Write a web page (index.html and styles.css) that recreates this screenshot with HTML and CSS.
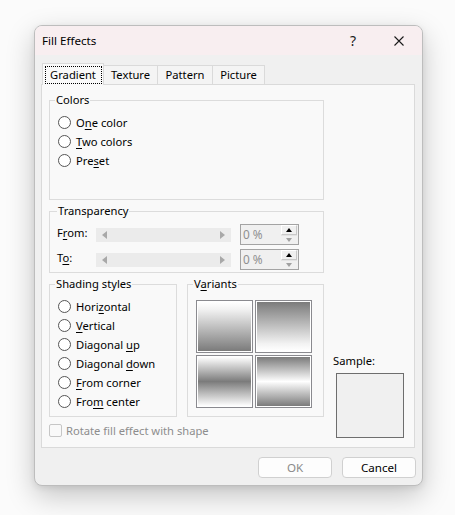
FILE: index.html
```html
<!DOCTYPE html>
<html lang="en">
<head>
<meta charset="utf-8">
<title>Fill Effects</title>
<link rel="stylesheet" href="styles.css">
</head>
<body>
<div class="dialog">
  <div class="titlebar">
    <span class="title">Fill Effects</span>
    <span class="tb-btn help">?</span>
    <span class="tb-btn close">
      <svg width="10" height="10" viewBox="0 0 10 10"><path d="M0.5 0.5 L9.5 9.5 M9.5 0.5 L0.5 9.5" stroke="#1a1a1a" stroke-width="1.1" fill="none"/></svg>
    </span>
  </div>
  <div class="body">
    <div class="tabs">
      <div class="tab selected w-gradient"><span class="focus">Gradient</span></div>
      <div class="tab w-texture">Texture</div>
      <div class="tab w-pattern">Pattern</div>
      <div class="tab w-picture">Picture</div>
    </div>
    <div class="panel">
      <div class="left">
        <fieldset class="group colors">
          <legend>Colors</legend>
          <div class="opts colors-opts">
            <div class="radio"><span class="circle"></span><span>O<u>n</u>e color</span></div>
            <div class="radio"><span class="circle"></span><span><u>T</u>wo colors</span></div>
            <div class="radio"><span class="circle"></span><span>Pre<u>s</u>et</span></div>
          </div>
        </fieldset>
        <fieldset class="group transparency">
          <legend>Transparency</legend>
          <div class="trow">
            <span class="tlabel">F<u>r</u>om:</span>
            <div class="slider"><span class="tri tri-left"></span><span class="tri tri-right"></span></div>
            <div class="spin">
              <span class="spin-text">0 %</span>
              <div class="spin-btns">
                <span class="sb up"><span class="arr arr-up"></span></span>
                <span class="sb down"><span class="arr arr-down"></span></span>
              </div>
            </div>
          </div>
          <div class="trow">
            <span class="tlabel">T<u>o</u>:</span>
            <div class="slider"><span class="tri tri-left"></span><span class="tri tri-right"></span></div>
            <div class="spin">
              <span class="spin-text">0 %</span>
              <div class="spin-btns">
                <span class="sb up"><span class="arr arr-up"></span></span>
                <span class="sb down"><span class="arr arr-down"></span></span>
              </div>
            </div>
          </div>
        </fieldset>
        <div class="lower">
          <fieldset class="group shading">
            <legend>Shading styles</legend>
            <div class="opts">
              <div class="radio"><span class="circle"></span><span>Hori<u>z</u>ontal</span></div>
              <div class="radio"><span class="circle"></span><span><u>V</u>ertical</span></div>
              <div class="radio"><span class="circle"></span><span>Diagonal <u>u</u>p</span></div>
              <div class="radio"><span class="circle"></span><span>Diagonal <u>d</u>own</span></div>
              <div class="radio"><span class="circle"></span><span><u>F</u>rom corner</span></div>
              <div class="radio"><span class="circle"></span><span>Fro<u>m</u> center</span></div>
            </div>
          </fieldset>
          <fieldset class="group variants">
            <legend>V<u>a</u>riants</legend>
            <div class="vgrid">
              <div class="cell"><div class="grad g1"></div></div>
              <div class="cell"><div class="grad g2"></div></div>
              <div class="cell"><div class="grad g3"></div></div>
              <div class="cell"><div class="grad g4"></div></div>
            </div>
          </fieldset>
        </div>
        <div class="check">
          <span class="box"></span>
          <span>Rotate fill effect with shape</span>
        </div>
      </div>
      <div class="right">
        <div class="sample-label">Sample:</div>
        <div class="sample"></div>
      </div>
    </div>
    <div class="buttons">
      <button class="btn disabled">OK</button>
      <button class="btn">Cancel</button>
    </div>
  </div>
</div>
</body>
</html>
```
FILE: styles.css
```css
* { box-sizing: border-box; }
html, body { margin: 0; padding: 0; }
body {
  background: #fbfbfb;
  font-family: "Noto Sans", "Open Sans", sans-serif;
  font-size: 11.2px;
  color: #000;
  width: 455px;
  height: 515px;
  overflow: hidden;
}
u { text-decoration: underline; text-underline-offset: 2px; }

.dialog {
  margin: 25px 0 0 34px;
  width: 389px;
  height: 461px;
  border: 1px solid #bdbdbd;
  border-radius: 8px;
  background: #f0f0f0;
  overflow: hidden;
  box-shadow: 0 10px 28px rgba(0, 0, 0, 0.22), 0 2px 6px rgba(0,0,0,0.08);
  display: flex;
  flex-direction: column;
}

.titlebar {
  height: 29px;
  background: #f8eef0;
  display: flex;
  align-items: center;
  flex-shrink: 0;
}
.title { padding-left: 7px; flex: 1; line-height: 16px; font-size: 11.6px; }
.tb-btn {
  width: 46px;
  height: 29px;
  display: flex;
  align-items: center;
  justify-content: center;
}
.help { font-size: 14px; color: #1a1a1a; }

.body {
  flex: 1;
  padding: 8px 0 0 6px;
  display: flex;
  flex-direction: column;
}

.tabs {
  display: flex;
  align-items: flex-end;
  padding-left: 1px;
  margin-bottom: -1px;
  height: 22px;
}
.tab {
  height: 19px;
  margin-bottom: 1px;
  border: 1px solid #dadada;
  border-bottom: none;
  background: #f4f4f4;
  text-align: center;
  line-height: 18px;
  margin-left: -1px;
}
.tab.selected {
  height: 22px;
  margin-bottom: 0;
  margin-left: 0;
  background: #f9f9f9;
  position: relative;
  z-index: 1;
  padding-top: 3px;
  line-height: 16px;
}
.w-gradient { width: 62px; }
.w-texture { width: 55px; }
.w-pattern { width: 56px; }
.w-picture { width: 53px; }
.focus {
  display: inline-block;
  outline: 1px dotted #000;
  padding: 0 3px;
  width: 55px;
  height: 16px;
}

.panel {
  width: 374px;
  height: 364px;
  border: 1px solid #dadada;
  background: #f9f9f9;
  padding: 7px 0 0 7px;
  display: flex;
}
.left {
  width: 275px;
  display: flex;
  flex-direction: column;
}

.group {
  margin: 0;
  padding: 0 0 0 5px;
  border: 1px solid #dcdcdc;
  min-width: 0;
}
.group legend {
  padding: 0 1px;
  line-height: 16px;
  height: 16px;
}

.colors { padding-top: 5px; }
.colors-opts { height: 86px; margin-left: 3px; }
.opts { margin-left: 3px; }
.radio {
  height: 19px;
  display: flex;
  align-items: center;
  gap: 5px;
}
.circle {
  width: 13px;
  height: 13px;
  border-radius: 50%;
  border: 1px solid #555;
  background: #fff;
  flex-shrink: 0;
}

.transparency {
  margin-top: 3px;
  padding-top: 5px;
  padding-bottom: 2px;
  padding-left: 7px;
}
.trow {
  height: 21px;
  display: flex;
  align-items: center;
}
.trow + .trow { margin-top: 4px; }
.tlabel { width: 39px; line-height: 16px; margin-top: -3px; }
.slider {
  width: 135px;
  height: 14px;
  background: #ebebeb;
  display: flex;
  align-items: center;
  justify-content: space-between;
  padding: 0 6px;
}
.tri { width: 0; height: 0; border-top: 4px solid transparent; border-bottom: 4px solid transparent; }
.tri-left { border-right: 5px solid #a8a8a8; }
.tri-right { border-left: 5px solid #a8a8a8; }
.spin {
  margin-left: 9px;
  width: 59px;
  height: 21px;
  border: 1px solid #a3a3a3;
  background: #f0f0f0;
  display: flex;
}
.spin-text {
  flex: 1;
  color: #8f8f8f;
  padding-left: 2px;
  line-height: 19px;
  font-size: 11.8px;
}
.spin-btns {
  width: 17px;
  display: flex;
  flex-direction: column;
  padding: 0 1px 0 0;
}
.sb {
  flex: 1;
  display: flex;
  align-items: center;
  justify-content: center;
  background: #f0f0f0;
}
.sb.up { border: 1px solid #c8c8c8; border-top-color: #fff; border-left-color: #fff; }
.sb.down { border-top: 1px solid #e3e3e3; }
.arr { width: 0; height: 0; border-left: 3.5px solid transparent; border-right: 3.5px solid transparent; }
.arr-up { border-bottom: 4px solid #000; }
.arr-down { border-top: 4px solid #a0a0a0; }

.lower {
  margin-top: 3px;
  display: flex;
  gap: 10px;
}
.shading {
  width: 128px;
  padding-top: 5px;
  padding-bottom: 5px;
}
.variants {
  width: 137px;
}
.vgrid {
  margin: 8px 0 0 3px;
  display: grid;
  grid-template-columns: 57px 57px;
  grid-template-rows: 53px 53px;
  gap: 2px;
}
.cell {
  border: 1px solid #8a8a8f;
  padding: 1px;
  background: #fff;
}
.grad { width: 100%; height: 100%; }
.g1 { background: linear-gradient(to bottom, #ffffff 0%, #f2f2f2 15%, #7b7b7b 100%); }
.g2 { background: linear-gradient(to bottom, #7b7b7b 0%, #f2f2f2 85%, #ffffff 100%); }
.g3 { background: linear-gradient(to bottom, #ffffff 0%, #7b7b7b 50%, #ffffff 100%); }
.g4 { background: linear-gradient(to bottom, #7b7b7b 0%, #ffffff 50%, #7b7b7b 100%); }

.check {
  margin-top: 7px;
  height: 13px;
  display: flex;
  align-items: center;
  gap: 4px;
  color: #8d8d8d;
}
.box {
  width: 13px;
  height: 13px;
  border: 1px solid #c6c6c6;
  border-radius: 2px;
  background: #f9f9f9;
}

.right {
  flex: 1;
  display: flex;
  flex-direction: column;
  justify-content: flex-end;
  padding: 0 0 9px 9px;
}
.sample-label { line-height: 16px; margin-bottom: 4px; }
.sample {
  margin-left: 3px;
  width: 68px;
  height: 65px;
  border: 1px solid #6e6e6e;
  background: #f0f0f0;
}

.buttons {
  margin-top: 9px;
  display: flex;
  justify-content: flex-end;
  gap: 10px;
  padding-right: 6px;
}
.btn {
  width: 74px;
  height: 21px;
  border: 1px solid #d0d0d0;
  border-radius: 4px;
  background: #fdfdfd;
  font-family: inherit;
  font-size: 11.6px;
  color: #000;
  padding: 0;
  line-height: 19px;
}
.btn.disabled { color: #8a8a8a; }
```
